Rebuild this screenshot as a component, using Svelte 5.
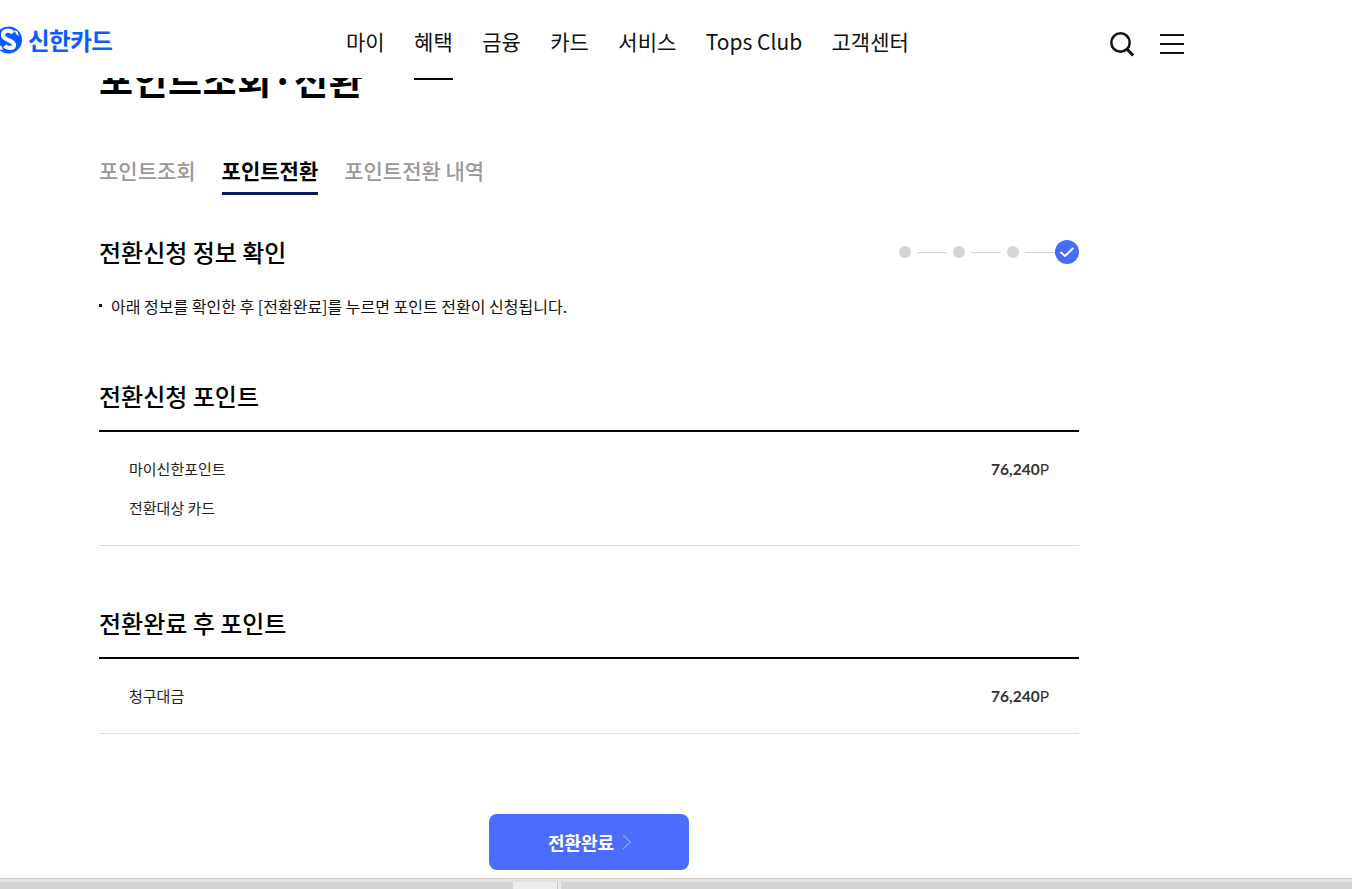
<script>
	const nav = ['마이', '혜택', '금융', '카드', '서비스', 'Tops Club', '고객센터'];
	const tabs = ['포인트조회', '포인트전환', '포인트전환 내역'];
</script>

<div class="page">
	<header class="header">
		<a class="logo" href="#logo">
			<svg width="23" height="28" viewBox="0 0 23 28" aria-hidden="true">
				<circle cx="8.500" cy="14" r="13.500" fill="#0a5cff" />
				<path d="M13 7C10 3.500 3 4 3 9c0 5.500 11 5 11 10 0 3.500-6 4-9.500 1" fill="none" stroke="#fff" stroke-width="4.200" />
				<path d="M14 4l3.500 1.500L19 10l-2.500-1.500zM3 24l-3-.500L-1.500 19l3 1z" fill="#fff" />
			</svg>
			<span>신한카드</span>
		</a>
		<nav class="nav">
			{#each nav as item}
				<a href="#nav" class:active={item === '혜택'}>{item}</a>
			{/each}
		</nav>
		<div class="tools">
			<svg width="26" height="26" viewBox="0 0 26 26" aria-hidden="true">
				<circle cx="11.500" cy="11.500" r="9.200" fill="none" stroke="#111" stroke-width="2.500" />
				<path d="M18 18l6 6.500" stroke="#111" stroke-width="3" />
			</svg>
			<div class="burger"><i></i><i></i><i></i></div>
		</div>
	</header>

	<main class="content">
		<h1>포인트조회·전환</h1>

		<ul class="tabs">
			{#each tabs as tab}
				<li class:on={tab === '포인트전환'}>{tab}</li>
			{/each}
		</ul>

		<div class="step-head">
			<h2>전환신청 정보 확인</h2>
			<div class="steps">
				<b></b><s></s><b></b><s></s><b></b><s></s>
				<svg width="24" height="24" viewBox="0 0 24 24" aria-hidden="true">
					<circle cx="12" cy="12" r="12" fill="#466cf8" />
					<path d="M5.500 12l4.500 4 8.500-8" fill="none" stroke="#fff" stroke-width="2" />
				</svg>
			</div>
		</div>

		<p class="note">아래 정보를 확인한 후 [전환완료]를 누르면 포인트 전환이 신청됩니다.</p>

		<section class="block">
			<h3>전환신청 포인트</h3>
			<div class="rows">
				<div class="row"><span>마이신한포인트</span><em><strong>76,240</strong>P</em></div>
				<div class="row"><span>전환대상 카드</span></div>
			</div>
		</section>

		<section class="block">
			<h3>전환완료 후 포인트</h3>
			<div class="rows">
				<div class="row"><span>청구대금</span><em><strong>76,240</strong>P</em></div>
			</div>
		</section>

		<div class="actions">
			<button type="button">
				전환완료
				<svg width="10" height="16" viewBox="0 0 10 16" aria-hidden="true">
					<path d="M1 1l7.500 7L1 15" fill="none" stroke="#8ea5fb" stroke-width="1.200" />
				</svg>
			</button>
		</div>
	</main>

	<div class="hscroll"><div class="thumb"></div></div>
</div>

<style>
	:global(body) {
		margin: 0;
		background: #fff;
	}

	.page {
		position: relative;
		height: 889px;
		overflow: hidden;
		font-family: 'Noto Sans CJK KR', 'Noto Sans', sans-serif;
		color: #000;
	}

	.header {
		position: absolute;
		top: 0;
		left: 0;
		right: 0;
		height: 78px;
		background: #fff;
		z-index: 2;
	}

	.logo {
		position: absolute;
		left: 0;
		top: 26px;
		display: flex;
		align-items: center;
		gap: 5px;
		color: #0a5cff;
		text-decoration: none;
		font-size: 23.500px;
		font-weight: 700;
		line-height: 28px;
		letter-spacing: -0.5px;
	}

	.nav {
		position: absolute;
		left: 346px;
		top: 0;
		display: flex;
		gap: 29.450px;
	}

	.nav a {
		height: 80px;
		box-sizing: border-box;
		padding-top: 25px;
		color: #111;
		text-decoration: none;
		font-size: 21px;
		line-height: 32px;
		white-space: nowrap;
		border-bottom: 2px solid transparent;
	}

	.nav a.active {
		border-bottom-color: #000;
	}

	.tools {
		position: absolute;
		left: 1109px;
		top: 31px;
		display: flex;
		align-items: flex-start;
		gap: 25px;
	}

	.burger {
		display: flex;
		flex-direction: column;
		gap: 7px;
		padding-top: 3px;
	}

	.burger i {
		display: block;
		width: 24px;
		height: 2px;
		background: #111;
	}

	.content {
		width: 980px;
		margin-left: 99px;
		padding-top: 54px;
	}

	h1 {
		margin: 0;
		font-size: 37px;
		line-height: 50px;
		font-weight: 700;
		letter-spacing: 0.5px;
	}

	.tabs {
		display: flex;
		gap: 26px;
		margin: 51px 0 0;
		padding: 0;
		list-style: none;
		font-size: 21px;
		font-weight: 500;
		line-height: 30px;
		color: #999;
	}

	.tabs li {
		height: 40px;
		box-sizing: border-box;
		border-bottom: 3px solid transparent;
	}

	.tabs li.on {
		color: #000;
		font-weight: 700;
		border-bottom-color: #0a1a5c;
	}

	.step-head {
		display: flex;
		justify-content: space-between;
		align-items: center;
		margin-top: 41px;
		height: 32px;
	}

	h2,
	h3 {
		margin: 0;
		font-size: 24px;
		line-height: 32px;
		font-weight: 500;
	}

	.steps {
		display: flex;
		align-items: center;
		gap: 6px;
	}

	.steps b {
		width: 12px;
		height: 12px;
		border-radius: 50%;
		background: #d5d5d5;
	}

	.steps s {
		width: 30px;
		height: 1px;
		background: #d5d5d5;
	}

	.steps s:last-of-type {
		margin-right: -6px;
	}

	.note {
		position: relative;
		margin: 26px 0 0;
		padding-left: 12px;
		font-size: 16px;
		line-height: 24px;
		color: #111;
	}

	.note::before {
		content: '';
		position: absolute;
		left: 0;
		top: 10px;
		width: 3px;
		height: 3px;
		background: #111;
	}

	.block {
		margin-top: 61px;
	}

	.block:first-of-type {
		margin-top: 62px;
	}

	.block h3 {
		height: 50px;
	}

	.rows {
		border-top: 2px solid #000;
		border-bottom: 1px solid #ddd;
		padding: 22px 30px;
		display: flex;
		flex-direction: column;
		gap: 9px;
	}

	.row {
		display: flex;
		justify-content: space-between;
		font-size: 15px;
		line-height: 30px;
		color: #222;
	}

	.row em {
		font-style: normal;
		font-family: Lato, sans-serif;
		font-size: 15.500px;
		color: #333;
	}

	.row strong {
		font-weight: 700;
	}

	.actions {
		display: flex;
		justify-content: center;
		margin-top: 80px;
	}

	button {
		display: flex;
		align-items: center;
		justify-content: center;
		gap: 8px;
		width: 200px;
		height: 56px;
		padding: 0 0 0 2px;
		border: 0;
		border-radius: 8px;
		background: #4a6cff;
		color: #fff;
		font-family: inherit;
		font-size: 18px;
		font-weight: 700;
	}

	.hscroll {
		position: absolute;
		left: 0;
		right: 0;
		bottom: 0;
		height: 7px;
		background: #d4d4d4;
		border-top: 3px solid #ecdcdc;
		box-shadow: 0 -1px #d8cac6;
	}

	.thumb {
		width: 44px;
		height: 7px;
		margin-left: 513px;
		background: #ededed;
		box-shadow:
			1px 0 #c4c4c4,
			4px 0 #ececec;
	}
</style>
